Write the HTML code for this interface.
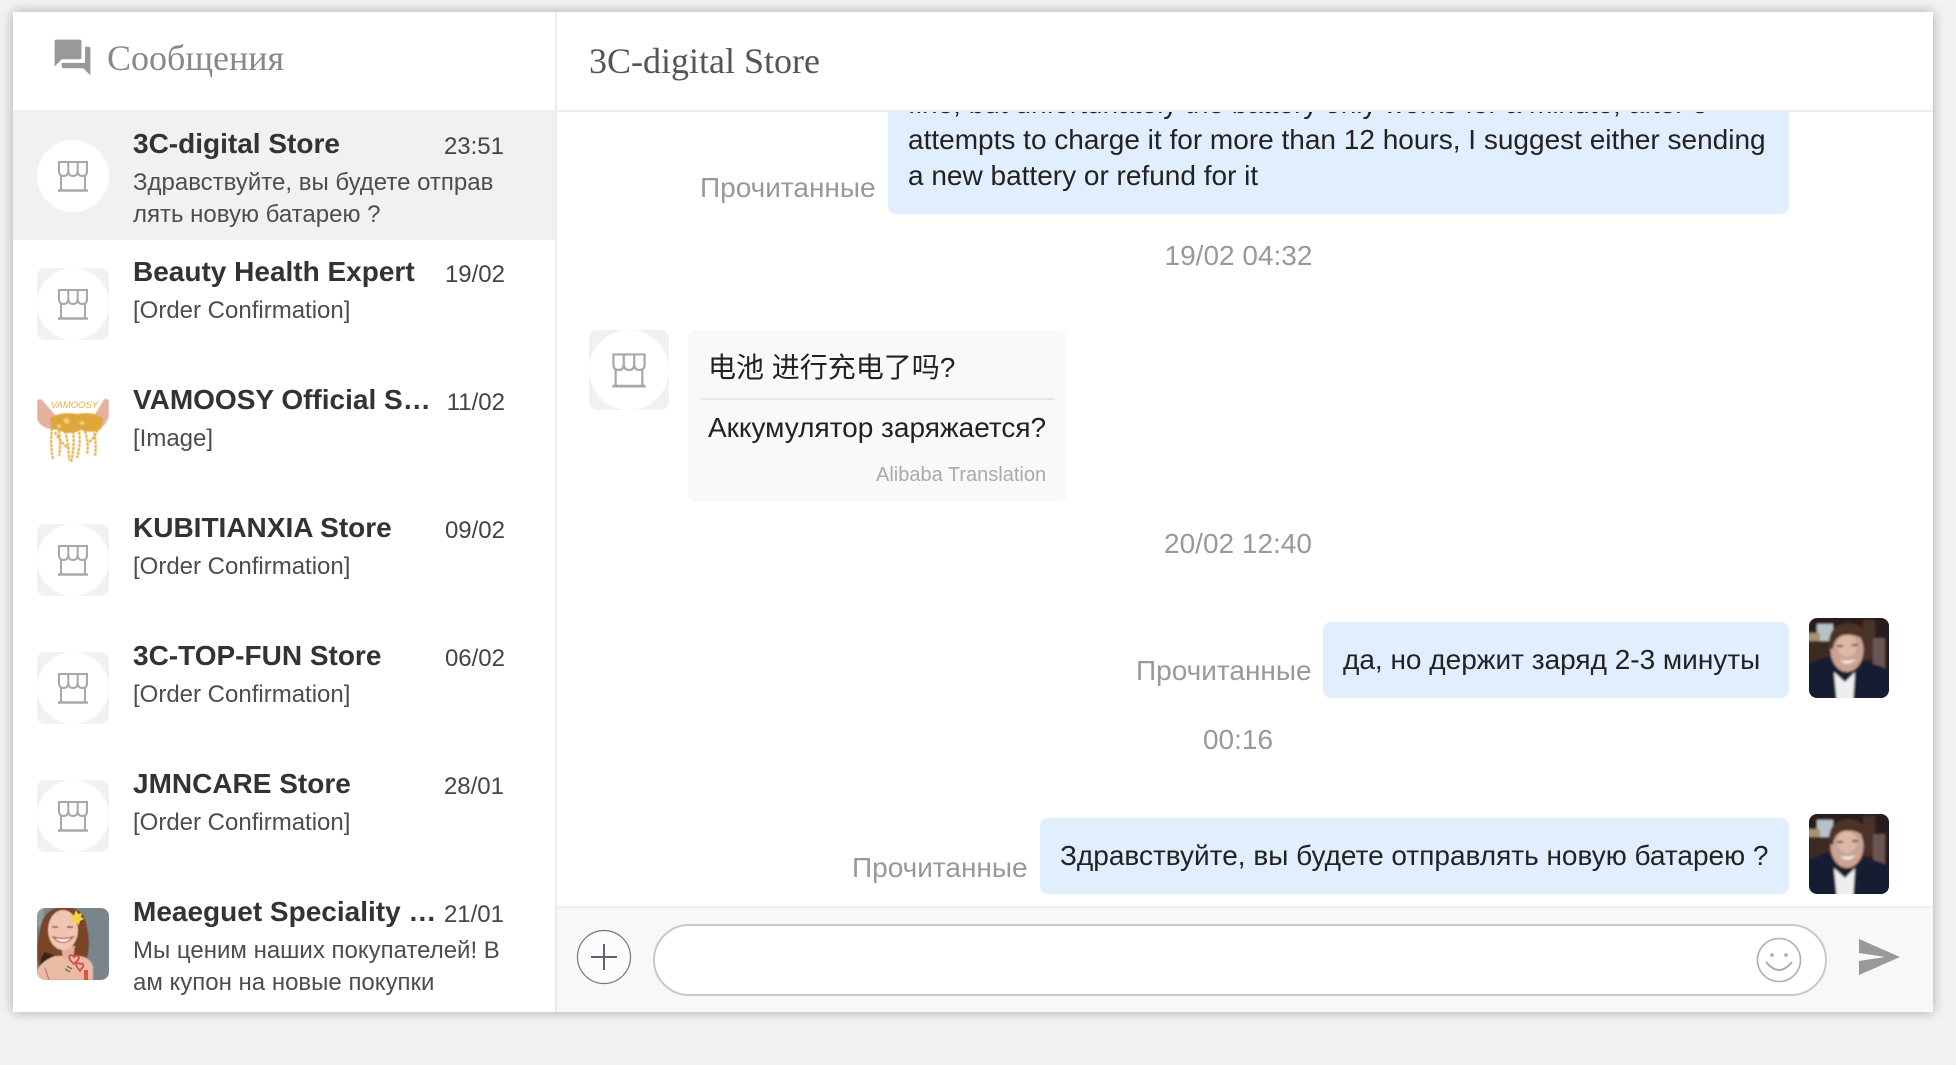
<!DOCTYPE html>
<html><head><meta charset="utf-8"><title>Сообщения</title>
<style>
html,body{margin:0;padding:0;width:1956px;height:1065px;overflow:hidden;background:#f2f2f2;font-family:"Liberation Sans","Noto Sans CJK SC",sans-serif}
.abs,.t{position:absolute}
.t{white-space:nowrap}
#panel{position:absolute;left:13px;top:12px;width:1920px;height:1000px;background:#fff;box-shadow:0 0 12px rgba(0,0,0,.3);}
#root{position:absolute;left:0;top:0;width:1956px;height:1065px}
.name{font-weight:700;font-size:28px;line-height:36px;color:#333;left:133px}
.date{font-size:24px;line-height:30px;color:#444}
.pv{font-size:24px;line-height:32px;color:#4d4d4d;left:133px}
.ser{font-family:"Liberation Serif","Noto Serif CJK SC",serif}
.read{font-size:28px;line-height:36px;color:#999}
.time{font-size:28px;line-height:36px;color:#999;width:300px;text-align:center;left:1088px}
.bub{position:absolute;background:#e0eefe;border-radius:8px}
.msg{font-size:28px;line-height:36px;color:#222}
.av{position:absolute;width:72px;height:72px;left:37px;border-radius:8px;overflow:hidden}
.av svg,.ph svg{display:block}
.ph{position:absolute;width:80px;height:80px;left:1809px;border-radius:8px;overflow:hidden}
</style></head><body>
<div id="root">
<svg width="0" height="0" style="position:absolute"><defs>
<g id="store"><rect width="72" height="72" fill="#f1f1f1"/><circle cx="36" cy="36" r="36" fill="#fff"/><g fill="none" stroke="#a8a8a8" stroke-width="2"><path d="M22 22H50V31Q50 36 45.300 36Q41 36 40.700 31Q40.500 36 36 36Q31.500 36 31.300 31Q31 36 26.700 36Q22 36 22 31Z"/><path d="M31.300 22V31M40.700 22V31M24 35V50M48 35V50"/><path d="M21 50.500H51" stroke-width="2.500"/></g></g>
<filter id="b1" x="-20%" y="-20%" width="140%" height="140%"><feGaussianBlur stdDeviation="1"/></filter>
<filter id="b2" x="-20%" y="-20%" width="140%" height="140%"><feGaussianBlur stdDeviation="0.500"/></filter>
<g id="man"><g filter="url(#b1)"><rect x="-5" y="-5" width="90" height="90" fill="#2b1d1a"/><rect x="8" y="6" width="16" height="17" fill="#b9c2c8"/><rect x="-2" y="15" width="13" height="8" fill="#a8946c"/><rect x="0" y="24" width="22" height="20" fill="#3d2a22"/><rect x="54" y="2" width="12" height="40" fill="#4a302c"/><rect x="64" y="20" width="12" height="30" fill="#6a5552"/><path d="M-5 85V52Q0 44 20 38L34 60L56 44Q76 48 85 56V85Z" fill="#141c30"/><path d="M25 54L36 64L46 54L44 85H28Z" fill="#eeeef0"/><ellipse cx="38" cy="32" rx="16.500" ry="22" fill="#cba392"/><ellipse cx="38" cy="28" rx="10" ry="11" fill="#dcb8a6"/><path d="M20 30Q18 6 40 5Q58 6 57 24Q48 15 34 17Q25 20 24 31Z" fill="#4e3226"/><path d="M31 42Q39 50 47 41Q39 44 31 42Z" fill="#f4ece8"/><path d="M28 28h6M43 27h6" stroke="#5a3c30" stroke-width="2"/></g></g>
</defs></svg>

<div id="panel"></div>

<!-- sidebar header -->
<svg class="abs" style="left:51px;top:36px" width="43" height="43" viewBox="0 0 24 24"><path fill="#999" d="M21 6h-2v9H6v2c0 .55.45 1 1 1h11l4 4V7c0-.55-.45-1-1-1zm-4 6V3c0-.55-.45-1-1-1H3c-.55 0-1 .45-1 1v14l4-4h10c.55 0 1-.45 1-1z"/></svg>
<div class="t ser" style="left:107px;top:38px;font-size:36px;line-height:40px;color:#888">Сообщения</div>
<div class="abs" style="left:13px;top:110px;width:1920px;height:2px;background:#eee"></div>
<div class="abs" style="left:555px;top:12px;width:2px;height:1000px;background:#ececec"></div>

<!-- active row -->
<div class="abs" style="left:13px;top:111px;width:542px;height:129px;background:#f1f1f1"></div>

<div class="av" style="top:140px"><svg width="72" height="72"><rect width="72" height="72" fill="#f1f1f1"/><circle cx="36" cy="36" r="36" fill="#fff"/><use href="#store"/></svg></div>
<div class="t name" style="top:126px">3C-digital Store</div>
<div class="t date" style="right:1452px;top:132px">23:51</div>
<div class="t pv" style="top:167px">Здравствуйте, вы будете отправ</div>
<div class="t pv" style="top:199px">лять новую батарею ?</div>

<div class="av" style="top:268px"><svg width="72" height="72"><use href="#store"/></svg></div>
<div class="t name" style="top:254px">Beauty Health Expert</div>
<div class="t date" style="right:1451px;top:260px">19/02</div>
<div class="t pv" style="top:295px">[Order Confirmation]</div>

<div class="av" style="top:396px;border-radius:0"><svg width="72" height="72" viewBox="0 0 72 72"><rect width="72" height="72" fill="#fff"/><g filter="url(#b2)"><path d="M0 5Q3 1 6 5Q14 14 20 21L14 33Q5 32 0 24Z" fill="#e3b29e"/><path d="M72 4Q68 1 66 5Q62 12 58 18L63 32Q69 30 72 20Z" fill="#e3b29e"/><path d="M13 22Q24 15 40 18Q56 15 66 22L64 33Q54 38 44 34Q32 40 22 34L14 33Z" fill="#dfa73a"/><path d="M26 24l4-2 3 4-4 2ZM42 26l4-1 2 3-4 1ZM20 29l3-1 1 3-3 1Z" fill="#f4cf80"/><g fill="none" stroke="#e0ab3e" stroke-width="2.200" stroke-dasharray="3 1"><path d="M15 32Q13 48 16 63"/><path d="M22 34Q24 50 22 60"/><path d="M28 35Q32 50 32 64"/><path d="M36 35Q38 50 34 66"/><path d="M42 36Q44 48 40 62"/><path d="M48 35Q52 48 50 58"/><path d="M56 33Q60 46 58 60"/><path d="M62 30Q58 42 52 46"/><path d="M18 36Q26 50 32 52"/></g></g><text x="37.500" y="12" text-anchor="middle" font-family="Liberation Sans" font-style="italic" font-size="9.500" fill="#e8b33c">VAMOOSY</text></svg></div>
<div class="t name" style="top:382px">VAMOOSY Official S…</div>
<div class="t date" style="right:1451px;top:388px">11/02</div>
<div class="t pv" style="top:423px">[Image]</div>

<div class="av" style="top:524px"><svg width="72" height="72"><use href="#store"/></svg></div>
<div class="t name" style="top:510px">KUBITIANXIA Store</div>
<div class="t date" style="right:1451px;top:516px">09/02</div>
<div class="t pv" style="top:551px">[Order Confirmation]</div>

<div class="av" style="top:652px"><svg width="72" height="72"><use href="#store"/></svg></div>
<div class="t name" style="top:638px">3C-TOP-FUN Store</div>
<div class="t date" style="right:1451px;top:644px">06/02</div>
<div class="t pv" style="top:679px">[Order Confirmation]</div>

<div class="av" style="top:780px"><svg width="72" height="72"><use href="#store"/></svg></div>
<div class="t name" style="top:766px">JMNCARE Store</div>
<div class="t date" style="right:1452px;top:772px">28/01</div>
<div class="t pv" style="top:807px">[Order Confirmation]</div>

<div class="av" style="top:908px"><svg width="72" height="72" viewBox="0 0 72 72"><g filter="url(#b2)"><rect x="-5" y="-5" width="82" height="82" fill="#79848b"/><rect x="-5" y="-5" width="12" height="24" fill="#8d9a9e"/><path d="M2 60Q-2 40 3 22Q6 -2 30 -1Q48 0 50 20Q54 36 50 50L44 54H18Z" fill="#7a4526"/><path d="M4 60Q2 50 8 44L18 48L16 60Z" fill="#3c2114"/><path d="M0 72V62Q6 52 18 48H40Q52 48 56 58V72Z" fill="#e9bba5"/><path d="M24 38H38L36 50H26Z" fill="#e4ae98"/><ellipse cx="26" cy="22" rx="15" ry="20" fill="#f0c6b0"/><path d="M16 29Q26 40 36 29Q26 32 16 29Z" fill="#fff" stroke="#c5463f" stroke-width="1.300"/><path d="M15 19h6M30 19h6" stroke="#7a4a38" stroke-width="1.400"/></g><g fill="none" stroke="#d94a4f" stroke-width="1.800"><path d="M33 52q-2-4 1-5q2 0 3 2q2-2 4-1q2 2-1 5l-3 3Z"/><path d="M40 59q-2-3 1-4q1 0 2 1q2-1 3 0q1 2-1 4l-2 3Z"/></g><path d="M30 58l5 3M28 61l5 3" stroke="#776e68" stroke-width="1.500"/><path d="M47 72V62h4v10Z" fill="#e5513a"/><path d="M8 60L12 72" stroke="#e5736a" stroke-width="1.500"/><path d="M39 2l2 4 4-1-1 4 3 2-4 2-1 4-3-3-4 1 1-4-3-3 4-1Z" fill="#f4d43a"/></svg></div>
<div class="t name" style="top:894px">Meaeguet Speciality …</div>
<div class="t date" style="right:1452px;top:900px">21/01</div>
<div class="t pv" style="top:935px">Мы ценим наших покупателей! В</div>
<div class="t pv" style="top:967px">ам купон на новые покупки</div>

<!-- chat header -->
<div class="t ser" style="left:589px;top:39px;font-size:36px;line-height:44px;color:#555">3C-digital Store</div>

<!-- messages scroller -->
<div class="abs" style="left:557px;top:112px;width:1376px;height:795px;overflow:hidden">
  <div class="bub" style="left:331px;top:-60px;width:901px;height:162px"></div>
  <div class="t msg" style="left:351px;top:-26px">fine, but unfortunately the battery only works for a minute, after 5</div>
  <div class="t msg" style="left:351px;top:10px">attempts to charge it for more than 12 hours, I suggest either sending</div>
  <div class="t msg" style="left:351px;top:46px">a new battery or refund for it</div>
</div>
<div class="t read" style="left:700px;top:170px">Прочитанные</div>
<div class="t time" style="top:238px;left:1088.500px">19/02 04:32</div>

<div class="av" style="left:589px;top:330px;width:80px;height:80px"><svg width="80" height="80" viewBox="0 0 72 72"><use href="#store"/></svg></div>
<div class="abs" style="left:688px;top:330px;width:379px;height:172px;background:#f9f9f9;border-radius:8px"></div>
<div class="t msg" style="left:708px;top:350px;font-family:'Liberation Sans','Noto Sans CJK SC',sans-serif">电池 进行充电了吗?</div>
<div class="abs" style="left:701px;top:398px;width:354px;height:2px;background:#e6e6e6"></div>
<div class="t msg" style="left:708px;top:410px">Аккумулятор заряжается?</div>
<div class="t" style="left:876px;top:463px;font-size:20px;line-height:24px;color:#aaa">Alibaba Translation</div>

<div class="t time" style="top:526px">20/02 12:40</div>

<div class="t read" style="left:1136px;top:653px">Прочитанные</div>
<div class="bub" style="left:1323px;top:622px;width:466px;height:76px"></div>
<div class="t msg" style="left:1343px;top:642px">да, но держит заряд 2-3 минуты</div>
<div class="ph" style="top:618px"><svg width="80" height="80"><use href="#man"/></svg></div>

<div class="t time" style="top:722px">00:16</div>

<div class="t read" style="left:852px;top:850px">Прочитанные</div>
<div class="bub" style="left:1040px;top:818px;width:749px;height:76px"></div>
<div class="t msg" style="left:1060px;top:838px">Здравствуйте, вы будете отправлять новую батарею ?</div>
<div class="ph" style="top:814px"><svg width="80" height="80"><use href="#man"/></svg></div>

<!-- footer -->
<div class="abs" style="left:557px;top:906px;width:1376px;height:106px;background:#f8f8f8;border-top:2px solid #efefef;box-sizing:border-box"></div>
<svg class="abs" style="left:576px;top:929px" width="56" height="56" viewBox="0 0 56 56"><circle cx="28" cy="28" r="26.500" fill="#fbfbfb" stroke="#70757f" stroke-width="1.200"/><path d="M15 28H41M28 15V41" stroke="#5d6270" stroke-width="2"/></svg>
<div class="abs" style="left:653px;top:924px;width:1174px;height:72px;box-sizing:border-box;background:#fff;border:2px solid #c9c9c9;border-radius:36px"></div>
<svg class="abs" style="left:1755px;top:936px" width="48" height="48" viewBox="0 0 48 48"><circle cx="24" cy="24" r="21.500" fill="#fff" stroke="#b0b0b0" stroke-width="1.600"/><circle cx="17" cy="19" r="1.800" fill="#aaa"/><circle cx="31" cy="19" r="1.800" fill="#aaa"/><path d="M11 26Q24 42 37 26" fill="none" stroke="#aaa" stroke-width="1.800"/></svg>
<svg class="abs" style="left:1858px;top:939px" width="43" height="37" viewBox="0 0 43 37"><path fill="#999" d="M1 0L42 18L1 36V22L27 18L1 14Z"/></svg>
</div>
</body></html>
